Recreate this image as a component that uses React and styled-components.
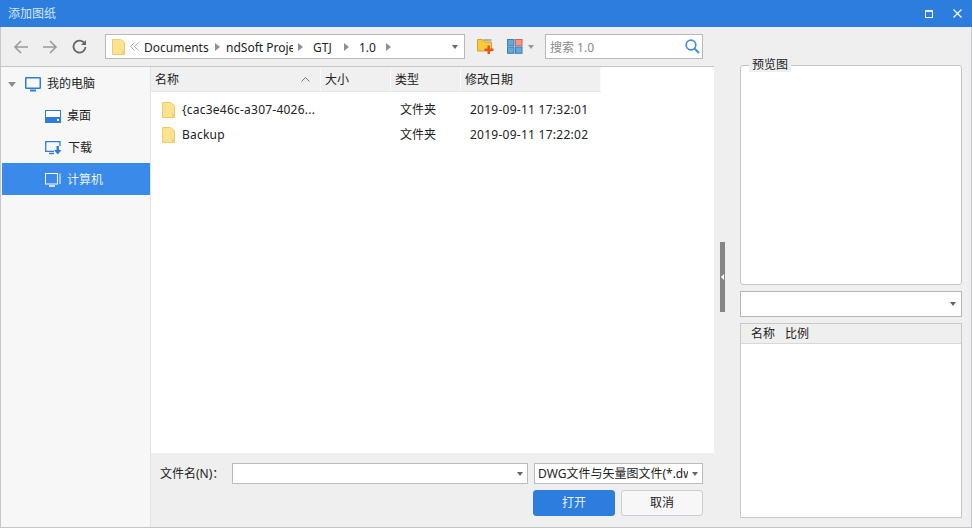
import React from "react";
import styled, { createGlobalStyle } from "styled-components";

const Global = createGlobalStyle`
  html, body { margin: 0; padding: 0; background: #efefef; }
  #root { width: 972px; height: 528px; overflow: hidden; }
  * { box-sizing: border-box; }
`;

const Dialog = styled.div`
  width: 972px; height: 528px; display: flex; flex-direction: column;
  background: #efefef; color: #222;
  font: 12px/16px "Noto Sans", "Noto Sans CJK SC", sans-serif;
  border: solid #c3c7cc; border-width: 0 1px 1px 1px;
`;
const TitleBar = styled.div`
  margin: 0 -1px; height: 27px; flex: none; background: #2d7ddf; color: #d5e6fa;
  display: flex; align-items: center; padding: 0 8px; font-size: 12px;
`;
const Title = styled.span`flex: 1;`;
const WinBtns = styled.div`display: flex; align-items: center; gap: 20px; padding-right: 2px;`;
const Body = styled.div`flex: 1; display: flex; min-height: 0;`;
const Main = styled.div`width: 713px; flex: none; display: flex; flex-direction: column; min-height: 0;`;
const Toolbar = styled.div`
  height: 40px; flex: none; display: flex; align-items: center; padding: 0 0 0 11px;
  border-bottom: 1px solid #c6c6c6;
`;
const NavGroup = styled.div`display: flex; align-items: center; gap: 11px; width: 93px;`;
const NavBtn = styled.span`display: flex; width: 18px; height: 18px; align-items: center; justify-content: center;`;
const Address = styled.div`
  width: 360px; height: 25px; background: #fff; border: 1px solid #b9b9b9;
  display: flex; align-items: center; padding-left: 6px; white-space: nowrap; overflow: hidden;
`;
const Crumb = styled.span`
  display: inline-block; overflow: hidden; white-space: nowrap; flex: none; padding-top: 2px;
  width: ${p => p.$w}px; margin-left: ${p => p.$ml || 0}px;
`;
const CrumbArrow = styled.span`
  width: 0; height: 0; border: 4px solid transparent; border-left: 5px solid #8f8f8f; border-right: 0;
  margin-left: ${p => p.$ml || 0}px; flex: none;
`;
const DropCaret = styled.span`
  width: 0; height: 0; border: 3px solid transparent; border-top: 4px solid ${p => p.$c || "#666"}; border-bottom: 0; flex: none;
`;
const AddressCaret = styled(DropCaret)`margin-left: auto; margin-right: 6px;`;
const ToolIcons = styled.div`display: flex; align-items: center; width: 80px; padding-left: 12px;`;
const Search = styled.div`
  width: 158px; height: 25px; background: #fff; border: 1px solid #b9b9b9; color: #8a8a8a;
  display: flex; align-items: center; justify-content: space-between; padding: 0 2px 0 4px;
`;
const SearchText = styled.span`padding-top: 2px;`;
const Split = styled.div`flex: 1; display: flex; min-height: 0;`;
const Sidebar = styled.div`
  width: 150px; flex: none; background: #f7f7f7; border-right: 1px solid #e3e3e3; padding: 0 0 0 1px;
`;
const NavRow = styled.div`
  height: 32px; display: flex; align-items: center; padding: 2px 0 0 ${p => p.$root ? 6 : 43}px;
  background: ${p => p.$active ? "#3a8ae9" : "transparent"};
  color: ${p => p.$active ? "#e8f2fd" : "#222"};
  gap: 6px;
`;
const Tri = styled.span`
  width: 0; height: 0; border: 4px solid transparent; border-top: 5px solid #8d8d8d; border-bottom: 0; margin-right: 3px;
`;
const Content = styled.div`flex: 1; display: flex; flex-direction: column; min-width: 0;`;
const FilePanel = styled.div`flex: 1; background: #fff; display: flex; flex-direction: column; min-height: 0;`;
const HeaderRow = styled.div`
  height: 25px; flex: none; display: flex; width: 450px; background: #f0f0f0; border-bottom: 1px solid #e8e8e8; padding-top: 1px;
`;
const HeadCell = styled.div`
  width: ${p => p.$w}px; display: flex; align-items: center; padding-left: 4px;
  border-right: 1px solid #fbfbfb; justify-content: space-between; padding-right: 10px;
`;
const Rows = styled.div`padding-top: 5px;`;
const FileRow = styled.div`height: 25px; display: flex; align-items: center;`;
const NameCell = styled.div`width: 249px; padding-left: 11px; display: flex; align-items: center; gap: 7px; letter-spacing: 0.23px;`;
const TypeCell = styled.div`width: 70px;`;
const DateCell = styled.div`letter-spacing: 0.26px;`;
const Bottom = styled.div`
  height: 74px; flex: none; padding: 10px 11px 0 9px; display: flex; flex-direction: column; gap: 6px;
`;
const NameLine = styled.div`display: flex; align-items: center; height: 21px;`;
const FileLabel = styled.span`width: 72px; flex: none;`;
const Combo = styled.div`
  height: 21px; background: #fff; border: 1px solid #bcbcbc; display: flex; align-items: center;
  justify-content: space-between; padding: 0 4px; width: ${p => p.$w}px; flex: none; white-space: nowrap; overflow: hidden;
  margin-left: ${p => p.$ml || 0}px;
`;
const TypeText = styled.span`overflow: hidden; width: 150px; margin-left: -1px;`;
const Actions = styled.div`display: flex; justify-content: flex-end; gap: 6px;`;
const Btn = styled.button`
  width: ${p => p.$w}px; height: 26px; border-radius: 3px; font: inherit; padding: 0;
  background: ${p => p.$primary ? "#2d7ddf" : "#f7f7f7"};
  color: ${p => p.$primary ? "#e6f0fc" : "#222"};
  border: 1px solid ${p => p.$primary ? "#2d7ddf" : "#c8ced6"};
`;
const Right = styled.div`
  flex: 1; display: flex; padding: 38px 9px 9px 6px; gap: 15px; min-width: 0;
`;
const SplitterCol = styled.div`width: 5px; flex: none; display: flex; align-items: flex-start; padding-top: 177px;`;
const Splitter = styled.div`
  width: 5px; height: 70px; background: #858585; display: flex; align-items: center;
`;
const SplitterTip = styled.span`
  width: 0; height: 0; border: 3px solid transparent; border-right: 3px solid #fff; border-left: 0; margin-left: 1px;
`;
const Side = styled.div`flex: 1; display: flex; flex-direction: column; min-width: 0;`;
const Group = styled.div`
  height: 220px; background: #fff; border: 1px solid #c4c4c4; border-radius: 3px; position: relative;
`;
const Legend = styled.span`
  position: absolute; left: 8px; top: -8px; padding: 0 3px; background: #efefef; line-height: 14px;
`;
const SideCombo = styled.div`
  margin-top: 6px; height: 26px; background: #fff; border: 1px solid #b5b5b5; display: flex; align-items: center;
  justify-content: flex-end; padding: 0 5px;
`;
const ScaleList = styled.div`
  margin-top: 6px; flex: 1; background: #fff; border: 1px solid #c8c8c8; display: flex; flex-direction: column;
`;
const ScaleHead = styled.div`
  height: 20px; background: #efefef; border-bottom: 1px solid #d8d8d8; display: flex; gap: 10px; padding: 1px 0 0 10px; align-items: center;
`;
const Spaced = styled.span`display: flex; margin-left: ${p => p.$ml}px;`;

const Folder = ({ w = 13, h = 16 }) => (
  <svg width={w} height={h} viewBox="0 0 13 16"><path d="M.5.5h8l4 3v12H.5z" fill="#fde28f" stroke="#eccb6f" /><path d="M10 15.5v-4h2.5v4z" fill="#f3d27a" /></svg>
);
const Monitor = ({ c = "#2d7ddf" }) => (
  <svg width="16" height="16" viewBox="0 0 16 16" fill="none"><rect x=".75" y="1.75" width="14.5" height="10.5" rx=".5" stroke={c} strokeWidth="1.5" /><path d="M5 14.500h6" stroke={c} strokeWidth="2" /></svg>
);
const ActiveMonitor = () => (
  <svg width="16" height="16" viewBox="0 0 16 16" fill="none"><rect x=".5" y="1.500" width="12" height="10.500" stroke="#fff" /><path d="M15 1.500v10.500" stroke="#fff" /><path d="M4 14h6" stroke="#fff" strokeWidth="1.500" /></svg>
);
const Desktop = () => (
  <svg width="16" height="13" viewBox="0 0 16 13"><rect x=".5" y=".5" width="15" height="12" fill="#fff" stroke="#2d7ddf" /><rect x="1" y="7" width="14" height="5.5" fill="#2d7ddf" /><rect x="12" y="9" width="2" height="2" fill="#fff" /></svg>
);
const Download = () => (
  <svg width="17" height="14" viewBox="0 0 17 14" fill="none"><path d="M15 5V.7H.7v9.600H9" stroke="#2d7ddf" strokeWidth="1.300" /><path d="M4 12.500h5" stroke="#2d7ddf" strokeWidth="1.500" /><path d="M11.500 5h2.500v4h2.500l-3.700 4.500L9 9h2.500z" fill="#2d7ddf" /></svg>
);
const Back = ({ flip }) => (
  <svg width="16" height="16" viewBox="0 0 16 16" fill="none" style={flip ? { transform: "scaleX(-1)" } : undefined}><path d="M15 8H2M8 2 2 8l6 6" stroke="#9a9a9a" strokeWidth="1.600" /></svg>
);

export default function App() {
  return (
    <Dialog>
      <Global />
      <TitleBar>
        <Title>添加图纸</Title>
        <WinBtns>
          <svg width="8" height="8" viewBox="0 0 8 8" fill="none"><rect x=".5" y="1" width="7" height="6.500" stroke="#fff" /><path d="M0 1h8" stroke="#fff" strokeWidth="1.500" /></svg>
          <svg width="9" height="9" viewBox="0 0 9 9" fill="none"><path d="m.5.5 8 8M8.500.5l-8 8" stroke="#fff" strokeWidth="1.100" /></svg>
        </WinBtns>
      </TitleBar>
      <Body>
        <Main>
          <Toolbar>
            <NavGroup>
              <NavBtn><Back /></NavBtn>
              <NavBtn><Back flip /></NavBtn>
              <NavBtn>
                <svg width="15" height="15" viewBox="0 0 15 15" fill="none"><path d="M12.700 4.600A6 6 0 1 0 13.500 8" stroke="#666" strokeWidth="1.800" /><path d="M14 1v5H9z" fill="#666" /></svg>
              </NavBtn>
            </NavGroup>
            <Address>
              <Folder />
              <Spaced $ml={5}>
                <svg width="9" height="9" viewBox="0 0 9 9" fill="none"><path d="M4.500.5l-4 4 4 4M8.500.5l-4 4 4 4" stroke="#999" strokeWidth=".8" /></svg>
              </Spaced>
              <Crumb $ml={5} $w={66}>Documents</Crumb>
              <CrumbArrow $ml={5} />
              <Crumb $ml={6} $w={67}>ndSoft Project</Crumb>
              <CrumbArrow $ml={5} />
              <Crumb $ml={10} $w={22}>GTJ</Crumb>
              <CrumbArrow $ml={9} />
              <Crumb $ml={10} $w={18}>1.0</Crumb>
              <CrumbArrow $ml={9} />
              <AddressCaret />
            </Address>
            <ToolIcons>
              <svg width="17" height="15" viewBox="0 0 17 15"><path d="M.5.5h5l2 2.500h7v9H.5z" fill="#fdc93c" stroke="#c9a53e" /><path d="M6.500 1h8" stroke="#b5b0a0" strokeWidth="2" /><path d="M10.500 6.500h2.500v3h3.500V12H13v3h-2.500v-3h-3V9.500h3z" fill="#e8541c" /></svg>
              <Spaced $ml={13}>
                <svg width="16" height="15" viewBox="0 0 16 15"><rect x=".5" y=".5" width="6.500" height="6.300" fill="#63a8dc" stroke="#3f7fb0" /><rect x="8.500" y=".5" width="6.500" height="6.300" fill="#f59584" stroke="#c96a58" /><rect x=".5" y="8" width="6.500" height="6.300" fill="#63a8dc" stroke="#3f7fb0" /><rect x="8.500" y="8" width="6.500" height="6.300" fill="#63a8dc" stroke="#3f7fb0" /></svg>
              </Spaced>
              <Spaced $ml={5}><DropCaret $c="#999" /></Spaced>
            </ToolIcons>
            <Search>
              <SearchText>搜索 1.0</SearchText>
              <svg width="15" height="15" viewBox="0 0 15 15" fill="none"><circle cx="6" cy="6" r="4.800" stroke="#3f8fdc" strokeWidth="1.700" /><path d="m9.500 9.500 4.500 4.500" stroke="#3f8fdc" strokeWidth="2" /></svg>
            </Search>
          </Toolbar>
          <Split>
            <Sidebar>
              <NavRow $root>
                <Tri />
                <Monitor />
                <span>我的电脑</span>
              </NavRow>
              <NavRow><Desktop /><span>桌面</span></NavRow>
              <NavRow><Download /><span>下载</span></NavRow>
              <NavRow $active><ActiveMonitor /><span>计算机</span></NavRow>
            </Sidebar>
            <Content>
              <FilePanel>
                <HeaderRow>
                  <HeadCell $w={170}>
                    <span>名称</span>
                    <svg width="9" height="5" viewBox="0 0 9 5" fill="none"><path d="m.5 4.500 4-4 4 4" stroke="#777" /></svg>
                  </HeadCell>
                  <HeadCell $w={70}>大小</HeadCell>
                  <HeadCell $w={70}>类型</HeadCell>
                  <HeadCell $w={140}>修改日期</HeadCell>
                </HeaderRow>
                <Rows>
                  <FileRow>
                    <NameCell><Folder />{"{cac3e46c-a307-4026..."}</NameCell>
                    <TypeCell>文件夹</TypeCell>
                    <DateCell>2019-09-11 17:32:01</DateCell>
                  </FileRow>
                  <FileRow>
                    <NameCell><Folder />Backup</NameCell>
                    <TypeCell>文件夹</TypeCell>
                    <DateCell>2019-09-11 17:22:02</DateCell>
                  </FileRow>
                </Rows>
              </FilePanel>
              <Bottom>
                <NameLine>
                  <FileLabel>文件名(N)：</FileLabel>
                  <Combo $w={296}><span /><DropCaret /></Combo>
                  <Combo $w={169} $ml={6}><TypeText>DWG文件与矢量图文件(*.dwg)</TypeText><DropCaret /></Combo>
                </NameLine>
                <Actions>
                  <Btn $primary $w={82}>打开</Btn>
                  <Btn $w={82}>取消</Btn>
                </Actions>
              </Bottom>
            </Content>
          </Split>
        </Main>
        <Right>
          <SplitterCol><Splitter><SplitterTip /></Splitter></SplitterCol>
          <Side>
            <Group><Legend>预览图</Legend></Group>
            <SideCombo><DropCaret /></SideCombo>
            <ScaleList>
              <ScaleHead><span>名称</span><span>比例</span></ScaleHead>
            </ScaleList>
          </Side>
        </Right>
      </Body>
    </Dialog>
  );
}
